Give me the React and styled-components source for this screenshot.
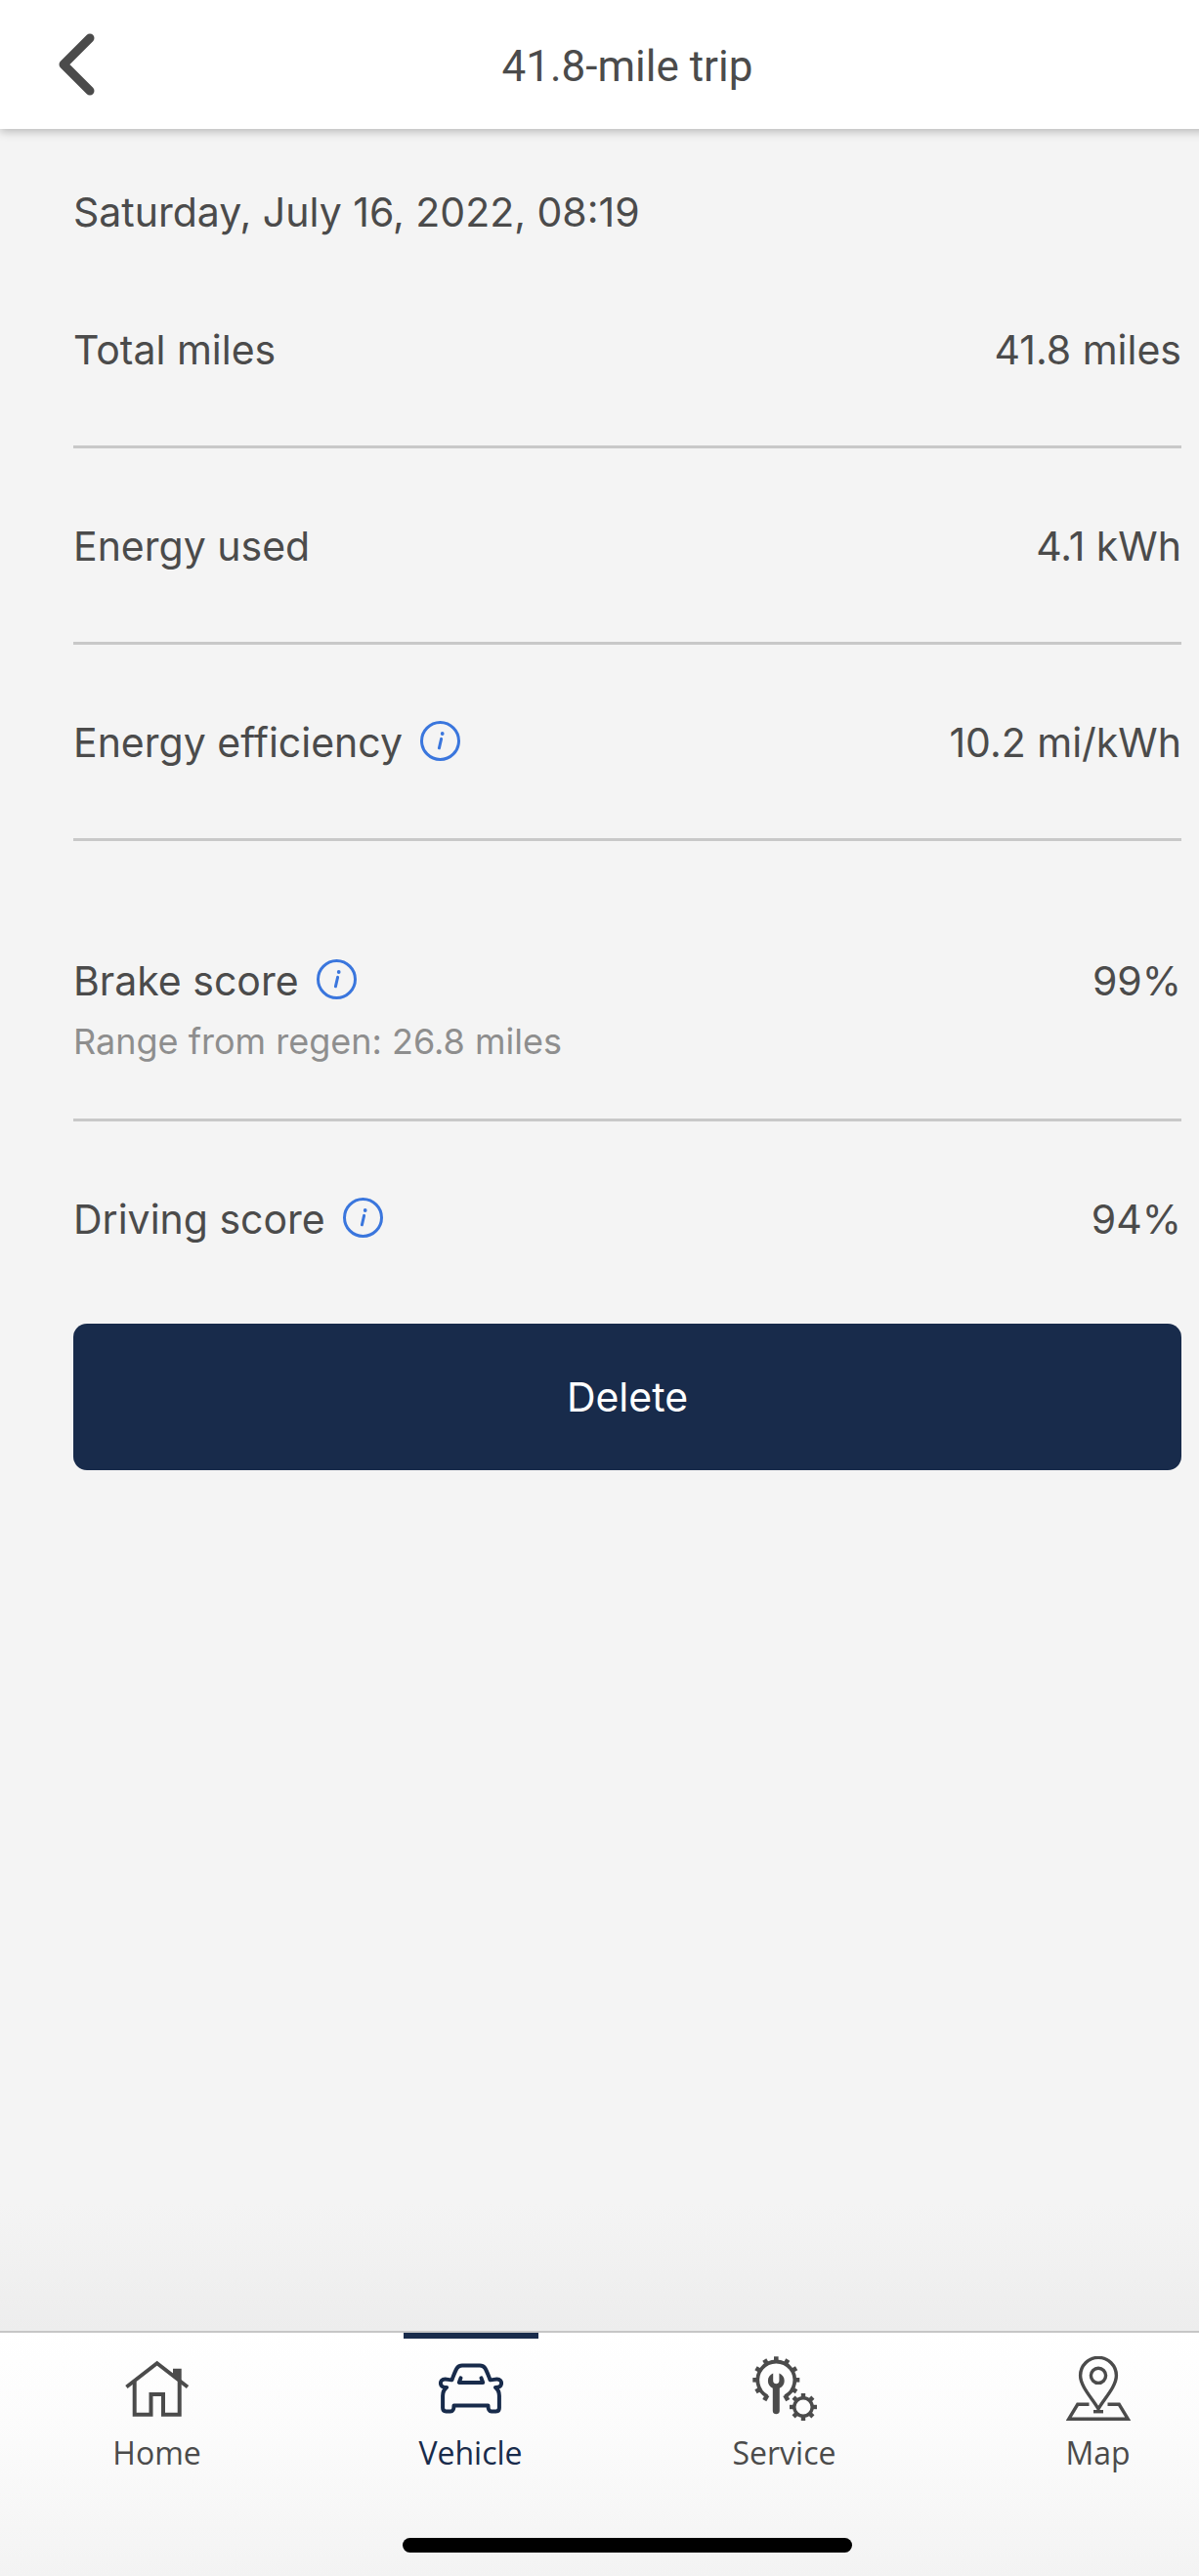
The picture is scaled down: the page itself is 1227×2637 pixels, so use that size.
import React from "react";
import styled, { createGlobalStyle } from "styled-components";

const ink = "#4b4b4b";
const navy = "#182b4b";
const blue = "#3a76dd";

const GlobalStyle = createGlobalStyle`
  *, *::before, *::after { box-sizing: border-box; }
  body {
    margin: 0;
    background: #f4f4f4;
    color: ${ink};
    font-family: Inter, "Open Sans", sans-serif;
  }
`;

const Viewport = styled.div`
  overflow-x: clip;
`;

/* The screen bleeds past the right edge of the viewport. */
const Screen = styled.div`
  display: flex;
  flex-direction: column;
  min-height: 100vh;
  margin-right: -57px;
`;

const Header = styled.header`
  display: grid;
  grid-template-columns: 120px 1fr 120px;
  align-items: center;
  height: 132px;
  background: #fff;
  box-shadow: 0 3px 9px rgba(0, 0, 0, 0.24);
  z-index: 1;
`;

const BackButton = styled.button`
  display: flex;
  justify-content: flex-end;
  padding: 0 22px 0 0;
  border: 0;
  background: none;
  color: ${ink};
  cursor: pointer;
`;

const Title = styled.h1`
  margin: 0;
  padding-top: 4px;
  font: 400 44px/60px Roboto, sans-serif;
  text-align: center;
`;

const Main = styled.main`
  flex: 1;
  padding: 59px 75px 0;
  background: linear-gradient(to top, #ededed, #f4f4f4 130px);
`;

const TripDate = styled.p`
  margin: 0 0 15px;
  font-size: 41px;
  line-height: 52px;
`;

const Stats = styled.dl`
  margin: 0;
`;

const Row = styled.div`
  display: grid;
  grid-template-columns: 1fr auto;
  padding: ${(p) => (p.$tall ? "117px 0 57px" : "74px 0 72px")};
  border-bottom: 3px solid #c8c8c8;
  font-size: 41px;
  line-height: 52px;

  &:last-child {
    padding-bottom: 81px;
    border-bottom: 0;
  }
`;

const Label = styled.dt`
  display: flex;
  align-items: center;
  gap: 18px;
`;

const Value = styled.dd`
  margin: 0;
`;

const Note = styled.dd`
  grid-column: 1 / -1;
  margin: 14px 0 0;
  color: #8e8e8e;
  font-size: 36px;
  line-height: 44px;
`;

const InfoButton = styled.button`
  display: flex;
  padding: 0 0 3px;
  border: 0;
  background: none;
  color: ${blue};
  cursor: pointer;
`;

const DeleteButton = styled.button`
  display: block;
  width: 100%;
  height: 150px;
  border: 0;
  border-radius: 14px;
  background: ${navy};
  color: #fff;
  font: 400 41px/52px Inter, sans-serif;
  cursor: pointer;
`;

const Footer = styled.footer`
  display: flex;
  flex-direction: column;
  align-items: center;
  gap: 66px;
  padding-bottom: 24px;
  border-top: 2px solid #c6c6c6;
  background: linear-gradient(#fff, #fbfbfb 45%, #f3f3f3);
`;

const Tabs = styled.nav`
  display: grid;
  grid-template-columns: repeat(4, 1fr);
  justify-items: center;
  width: 100%;
`;

const Tab = styled.a`
  display: flex;
  flex-direction: column;
  align-items: center;
  gap: 12px;
  width: 138px;
  padding-top: 18px;
  border-top: 6px solid ${(p) => (p.$active ? navy : "transparent")};
  color: ${(p) => (p.$active ? navy : ink)};
  font: 400 32px/42px "Open Sans", "Noto Sans", sans-serif;
  text-decoration: none;
`;

const HomeIndicator = styled.div`
  width: 460px;
  height: 15px;
  border-radius: 8px;
  background: #000;
`;

const Chevron = () => (
  <svg width="38" height="64" viewBox="0 0 38 64" fill="none" stroke="currentColor" strokeWidth="9" strokeLinecap="round" strokeLinejoin="round" aria-hidden="true">
    <path d="M32 5 5 32 32 59" />
  </svg>
);

const InfoIcon = () => (
  <svg width="41" height="41" viewBox="0 0 41 41" fill="none" stroke="currentColor" strokeLinecap="round" aria-hidden="true">
    <circle cx="20.5" cy="20.5" r="19" strokeWidth="3" />
    <path d="M21.6 18.4 19.4 27.8" strokeWidth="3" />
    <circle cx="22.7" cy="13" r="1.9" fill="currentColor" stroke="none" />
  </svg>
);

const TabIcon = ({ children }) => (
  <svg width="66" height="66" viewBox="0 0 66 66" fill="none" stroke="currentColor" strokeWidth="4" aria-hidden="true">
    {children}
  </svg>
);

const HomeIcon = () => (
  <TabIcon>
    <path d="M1.4 31.6 32.7 7.2 64 31.6" strokeWidth="3.8" />
    <path d="M9.7 26V59.7H26.5V39H39V59.7H55.7V26" />
    <path d="M49 12.7h8.7V27L49 20z" fill="currentColor" stroke="none" />
  </TabIcon>
);

const CarIcon = () => (
  <TabIcon>
    <g strokeLinecap="round" strokeLinejoin="round">
      <path d="M13.5 24.2C15.5 19 17 14.5 18.8 12 20.2 10.2 21.8 9.6 24 9.6H42C44.2 9.6 45.8 10.2 47.2 12 49 14.5 50.5 19 52.5 24.2 55 24.6 57 23.5 59.5 23.5 62.5 23.5 64.5 25.5 64 28.5 63.5 31.5 61.5 32 58 31.9 60.5 34 61.9 36.5 61.9 40.5V53C61.9 55.5 60.8 56.4 58.5 56.4H54C51.5 56.4 50.5 55 50.5 50.5H15.5C15.5 55 14.5 56.4 12 56.4H7.5C5.2 56.4 4.1 55.5 4.1 53V40.5C4.1 36.5 5.5 34 8 31.9 4.5 32 2.5 31.5 2 28.5 1.5 25.5 3.5 23.5 6.5 23.5 9 23.5 11 24.6 13.5 24.2Z" />
      <path d="M22.5 22.4 20.8 26.9H45.2L43.5 22.4" />
    </g>
  </TabIcon>
);

const Teeth = ({ cx, cy, inner, outer, angles, width }) =>
  angles.map((a) => (
    <path
      key={a}
      d={`M${cx} ${cy - inner}V${cy - outer}`}
      strokeWidth={width}
      transform={`rotate(${a} ${cx} ${cy})`}
    />
  ));

const ServiceIcon = () => (
  <TabIcon>
    <path d="M15.1 41.1A19 19 0 1 1 33.5 41.1" strokeWidth="3.8" />
    <Teeth cx={24.3} cy={24.3} inner={18} outer={24} width={4.6} angles={[0, 30, 60, 90, 120, 150, 210, 240, 270, 300, 330]} />
    <path d="M21.2 17.6C18 18.8 15.9 21.6 15.9 25.2 15.9 28.6 17.8 31.2 20.8 32.8V56C20.8 60.4 27.8 60.4 27.8 56V32.8C30.8 31.2 32.7 28.6 32.7 25.2 32.7 21.6 30.6 18.8 27.4 17.6V25.2C27.4 29.2 21.2 29.2 21.2 25.2Z" fill="currentColor" stroke="none" />
    <circle cx="52" cy="52" r="9.2" strokeWidth="3.4" />
    <Teeth cx={52} cy={52} inner={9} outer={14} width={4.4} angles={[0, 45, 90, 135, 180, 225, 270, 315]} />
  </TabIcon>
);

const MapIcon = () => (
  <TabIcon>
    <g strokeWidth="3.4">
      <path d="M33 54C28 44.5 14.6 31.5 14.6 19.8A18.4 18.4 0 0 1 51.4 19.8C51.4 31.5 38 44.5 33 54Z" />
      <circle cx="33" cy="19.8" r="7.6" />
      <path d="M23.5 49.3H11.8L2.8 64.2H63.2L54.2 49.3H42.5" />
      <path d="M28 56.7H38" />
    </g>
  </TabIcon>
);

const stats = [
  { label: "Total miles", value: "41.8 miles" },
  { label: "Energy used", value: "4.1 kWh" },
  { label: "Energy efficiency", value: "10.2 mi/kWh", info: true },
  { label: "Brake score", value: "99%", info: true, note: "Range from regen: 26.8 miles" },
  { label: "Driving score", value: "94%", info: true },
];

const tabs = [
  { label: "Home", Icon: HomeIcon },
  { label: "Vehicle", Icon: CarIcon, active: true },
  { label: "Service", Icon: ServiceIcon },
  { label: "Map", Icon: MapIcon },
];

export default function App() {
  return (
    <Viewport>
      <GlobalStyle />
      <Screen>
        <Header>
          <BackButton type="button" aria-label="Back">
            <Chevron />
          </BackButton>
          <Title>41.8-mile trip</Title>
        </Header>
        <Main>
          <TripDate>Saturday, July 16, 2022, 08:19</TripDate>
          <Stats>
            {stats.map(({ label, value, info, note }) => (
              <Row key={label} $tall={Boolean(note)}>
                <Label>
                  {label}
                  {info && (
                    <InfoButton type="button" aria-label={`About ${label}`}>
                      <InfoIcon />
                    </InfoButton>
                  )}
                </Label>
                <Value>{value}</Value>
                {note && <Note>{note}</Note>}
              </Row>
            ))}
          </Stats>
          <DeleteButton type="button">Delete</DeleteButton>
        </Main>
        <Footer>
          <Tabs aria-label="Main">
            {tabs.map(({ label, Icon, active }) => (
              <Tab key={label} href={`#${label.toLowerCase()}`} $active={active} aria-current={active ? "page" : undefined}>
                <Icon />
                {label}
              </Tab>
            ))}
          </Tabs>
          <HomeIndicator />
        </Footer>
      </Screen>
    </Viewport>
  );
}
